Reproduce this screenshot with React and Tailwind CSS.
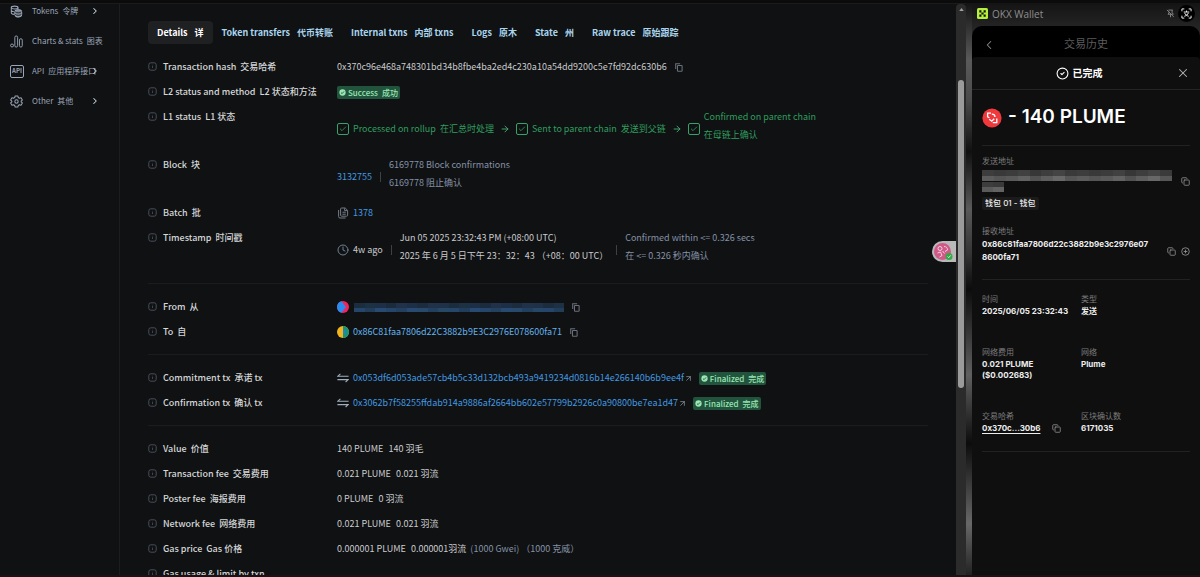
import React from 'react';
import { ArrowRight, ArrowUpRight, Check, ChevronLeft, ChevronRight, CircleCheck, Clock, Copy, X } from 'lucide-react';

const TABS = [
  ['Details', '详'],
  ['Token transfers', '代币转账'],
  ['Internal txns', '内部 txns'],
  ['Logs', '原木'],
  ['State', '州'],
  ['Raw trace', '原始跟踪'],
];

const FEES = [
  ['Value', '价值', '140 PLUME', '140 羽毛'],
  ['Transaction fee', '交易费用', '0.021 PLUME', '0.021 羽流'],
  ['Poster fee', '海报费用', '0 PLUME', '0 羽流'],
  ['Network fee', '网络费用', '0.021 PLUME', '0.021 羽流'],
];

// shades of the masked address blocks
const BLUE_MASK = ['#233f5e', '#274767', '#26456a', '#223d5a', '#294a70', '#26456a', '#24405e', '#294a70', '#28486c'];
const GRAY_MASK = ['#5c5c5c', '#555555', '#5a5a5a', '#626262', '#525252', '#5e5e5e', '#686868', '#565656'];

/* ── Icons ────────────────────────────────────────────────────── */

const TokensIcon = () => (
  <svg viewBox="0 0 14 14" className="w-[13px] h-[13px]" fill="none" stroke="currentColor" strokeWidth="1.1">
    <ellipse cx="5" cy="2.8" rx="3.6" ry="1.6" />
    <path d="M1.4 2.8v5.6c0 .9 1.4 1.6 3.2 1.7M1.4 5.6c0 .8 1.2 1.4 2.8 1.6M8.6 2.8v1.4" />
    <rect x="5.2" y="5" width="7.4" height="7.8" rx="3" fill="#7a8494" stroke="#a0aec0" />
    <path d="M5.4 7.2c1.6 1.6 5.4 1.6 7 0M5.4 10c1.6 1.6 5.4 1.6 7 0" stroke="#101112" strokeWidth=".8" />
  </svg>
);

const ChartsIcon = () => (
  <svg viewBox="0 0 14 14" className="w-[13px] h-[13px]" fill="none" stroke="currentColor" strokeWidth="1">
    <circle cx="2.2" cy="11.3" r="1.6" />
    <rect x="5.2" y="1" width="3" height="12" rx="1.5" />
    <rect x="10.2" y="4" width="3" height="9" rx="1.5" />
  </svg>
);

const ApiIcon = () => (
  <span className="flex items-center justify-center w-[14px] h-[13px] border border-current rounded-[2px] text-[6px] leading-none font-bold">
    API
  </span>
);

const GearIcon = () => (
  <svg viewBox="0 0 14 14" className="w-[13px] h-[13px]" fill="none" stroke="currentColor" strokeWidth="1.1" strokeLinejoin="round">
    <path d="M5.6 1h2.8l.5 1.7 1.3.8 1.7-.5 1.4 2.4L12 6.6v.8l1.3 1.2-1.4 2.4-1.7-.5-1.3.8-.5 1.7H5.6l-.5-1.7-1.3-.8-1.7.5L.7 8.6 2 7.4v-.8L.7 5.4 2.1 3l1.7.5 1.3-.8z" />
    <circle cx="7" cy="7" r="1.8" />
  </svg>
);

const InfoIcon = () => (
  <svg viewBox="0 0 9 9" className="w-[9px] h-[9px] mb-[2px] shrink-0 text-[#555d69]" fill="none" stroke="currentColor" strokeWidth=".8">
    <rect x=".8" y=".8" width="7.4" height="7.4" rx="2" />
    <path d="M4.5 4v2M4.5 2.8v.6" strokeWidth=".7" />
  </svg>
);

const CopyIcon = () => (
  <svg viewBox="0 0 9 10" className="w-[8px] h-[9px]" fill="none" stroke="currentColor" strokeWidth="1.2">
    <path d="M.8 6.8V.8h5" />
    <rect x="2.8" y="2.8" width="5.2" height="6.4" rx=".6" />
  </svg>
);

const BatchIcon = () => (
  <svg viewBox="0 0 12 12" className="w-[12px] h-[12px] text-[#737b87]" fill="none" stroke="currentColor" strokeWidth="1">
    <path d="M4.6 1h3.6l2.4 2.4v4.8a1 1 0 0 1-1 1h-5a1 1 0 0 1-1-1V2a1 1 0 0 1 1-1z" strokeLinejoin="round" />
    <path d="M1.6 3v6.6a1.4 1.4 0 0 0 1.4 1.4h5.6M5.4 5.2h3.4M5.4 7.2h3.4M7.6 1.4v2.2h2.8" />
  </svg>
);

const SwapIcon = () => (
  <svg viewBox="0 0 12 10" className="w-[12px] h-[10px] shrink-0 text-[#a0aec0]" fill="none" stroke="currentColor" strokeWidth="1.1">
    <path d="M11.6 3.2H.8l2.6-2.4M.4 6.6h10.8L8.6 9" />
  </svg>
);

const BadgeCheck = () => (
  <svg viewBox="0 0 8 8" className="w-[7px] h-[7px]">
    <circle cx="4" cy="4" r="3.6" fill="#9ae6b4" />
    <path d="M2.3 4.1l1.2 1.2 2.2-2.5" fill="none" stroke="#22543d" strokeWidth="1" />
  </svg>
);

const PlumeLogo = () => (
  <svg viewBox="0 0 20 20" className="w-[20px] h-[20px] shrink-0">
    <circle cx="10" cy="10" r="9.6" fill="#f0393d" />
    <g fill="none" stroke="#fff" strokeWidth="1.3">
      <path d="M9 5.2H5.6v3.6l1.8 1" />
      <path d="M9.8 6.2c2.2 0 3.2 1.2 3.2 2.8" />
      <path d="M7.2 11.2l2.6 2 2.4-2.4" />
      <path d="M14.8 10.6v4h-4" />
    </g>
  </svg>
);

const OkxLogo = () => (
  <svg viewBox="0 0 11 11" className="w-[11px] h-[11px]">
    <rect width="11" height="11" rx="1.5" fill="#b5f03c" />
    <path d="M2.3 2.3h2.1v2.1H2.3zM6.6 2.3h2.1v2.1H6.6zM4.4 4.4h2.2v2.2H4.4zM2.3 6.6h2.1v2.1H2.3zM6.6 6.6h2.1v2.1H6.6z" fill="#111" />
  </svg>
);

const PinOffIcon = () => (
  <svg viewBox="0 0 10 10" className="w-[9px] h-[9px] text-[#8a8a8a]" fill="none" stroke="currentColor" strokeWidth="1">
    <path d="M2.6 1.2h5M6.8 1.2v3l1.4 1.6H5.6M3.4 3v1.4L2.2 5.8h3M5 5.8v3.4M1 1l7.6 7.8" />
  </svg>
);

const ScanIcon = () => (
  <svg viewBox="0 0 12 12" className="w-[11px] h-[11px]" fill="none" stroke="#fff" strokeWidth="1">
    <path d="M1 3.6V1h2.6M8.4 1H11v2.6M11 8.4V11H8.4M3.6 11H1V8.4M3 4.4h6M6 2.8v1.6M4 5.4c.6 1.8 2.2 3 4.4 3.6M8 5.4c-.6 1.8-2.2 3-4.4 3.6" />
  </svg>
);

const Mask = ({ colors, count, className }) => (
  <svg viewBox={`0 0 ${count} 2`} preserveAspectRatio="none" shapeRendering="crispEdges" className={className}>
    {Array.from({ length: count * 2 }, (_, i) => (
      <rect
        key={i}
        x={i % count}
        y={Math.floor(i / count)}
        width="1"
        height="1"
        fill={colors[Math.floor(i / 2) % colors.length]}
        opacity={i < count ? 0.6 : 1}
      />
    ))}
  </svg>
);

/* ── Explorer ─────────────────────────────────────────────────── */

const Row = ({ en, zh, children }) => (
  <div className="flex">
    <dt className="flex items-center gap-[6px] w-[189px] h-[18px] shrink-0 font-medium text-[#d4d6d8]">
      <InfoIcon />
      <span className="flex gap-1">
        <span>{en}</span>
        <span>{zh}</span>
      </span>
    </dt>
    <dd className="flex items-center min-w-0">{children}</dd>
  </div>
);

const Divider = () => <div className="h-px mt-[6px] mb-[7px] bg-[#1a1c1e]" />;

const Stack = ({ children, className = '' }) => (
  <div className={`flex flex-col pb-[5px] ${className}`}>{children}</div>
);

const Separator = () => <span className="w-px h-[10px] bg-[#3c4148]" />;

const Badge = ({ en, zh }) => (
  <span className="flex items-center gap-[2px] h-[13px] px-[2px] rounded-[2px] bg-[#22543d] text-[#9ae6b4] text-[8px] leading-[13px] font-medium">
    <BadgeCheck />
    <span className="flex gap-1">
      <span>{en}</span>
      <span>{zh}</span>
    </span>
  </span>
);

const CopyButton = ({ label }) => (
  <button type="button" aria-label={label} className="ml-[8px] text-[#69707a]">
    <CopyIcon />
  </button>
);

const StepBox = () => (
  <span className="flex items-center justify-center w-[12px] h-[12px] mr-1 rounded-[2px] border border-[#38a169]">
    <Check size={8} strokeWidth={2.5} />
  </span>
);

const NavItem = ({ icon, en, zh, arrow }) => (
  <a href="#" className="relative flex items-center h-[14px] text-[#9aa5b8]">
    <span className="flex items-center w-[22px]">{icon}</span>
    <span className="flex gap-1 whitespace-nowrap">
      <span>{en}</span>
      <span>{zh}</span>
    </span>
    {arrow && <ChevronRight size={10} strokeWidth={2.5} className="absolute right-[19px] text-[#cbd5e0]" />}
  </a>
);

const Sidebar = () => (
  <nav className="w-[120px] shrink-0 flex flex-col gap-4 pl-[10px] border-r border-[#1b1d1f] text-[8px] leading-[14px]">
    <NavItem icon={<TokensIcon />} en="Tokens" zh="令牌" arrow />
    <NavItem icon={<ChartsIcon />} en="Charts & stats" zh="图表" />
    <NavItem icon={<ApiIcon />} en="API" zh="应用程序接口" arrow />
    <NavItem icon={<GearIcon />} en="Other" zh="其他" arrow />
  </nav>
);

const HashLink = ({ children }) => (
  <a href="#" className="text-[#63b3ed] whitespace-nowrap">
    {children}
  </a>
);

const ParentTx = ({ hash }) => (
  <>
    <SwapIcon />
    <a href="#" className="flex items-center ml-1 mr-[6px] text-[#4299e1] whitespace-nowrap">
      {hash}
      <ArrowUpRight size={9} className="text-[#8b949e]" />
    </a>
    <Badge en="Finalized" zh="完成" />
  </>
);

const Details = () => (
  <dl className="flex flex-col gap-[7px] mt-[14px] whitespace-nowrap text-[#c9cbce]">
    <Row en="Transaction hash" zh="交易哈希">
      0x370c96e468a748301bd34b8fbe4ba2ed4c230a10a54dd9200c5e7fd92dc630b6
      <CopyButton label="Copy transaction hash" />
    </Row>
    <Row en="L2 status and method" zh="L2 状态和方法">
      <Badge en="Success" zh="成功" />
    </Row>
    <Row en="L1 status" zh="L1 状态">
      <div className="flex items-center text-[#2f9e5f]">
        <StepBox />
        <span>Processed on rollup</span>
        <span className="ml-1">在汇总时处理</span>
        <ArrowRight size={10} className="mx-[6px] text-[#48bb78]" />
        <StepBox />
        <span>Sent to parent chain</span>
        <span className="ml-1">发送到父链</span>
        <ArrowRight size={10} className="mx-[6px] text-[#48bb78]" />
        <StepBox />
        <Stack>
          <span>Confirmed on parent chain</span>
          <span>在母链上确认</span>
        </Stack>
      </div>
    </Row>
    <Row en="Block" zh="块">
      <a href="#" className="mr-[8px] text-[#4299e1]">3132755</a>
      <Separator />
      <Stack className="ml-[8px] text-[#8491a8]">
        <span>6169778 Block confirmations</span>
        <span>6169778 阻止确认</span>
      </Stack>
    </Row>
    <Row en="Batch" zh="批">
      <BatchIcon />
      <a href="#" className="ml-1 text-[#4299e1]">1378</a>
    </Row>
    <Row en="Timestamp" zh="时间戳">
      <Clock size={12} strokeWidth={2} className="text-[#718096]" />
      <span className="ml-1 mr-[8px]">4w ago</span>
      <Separator />
      <Stack className="mx-[8px]">
        <span>Jun 05 2025 23:32:43 PM (+08:00 UTC)</span>
        <span>2025 年 6 月 5 日下午 23：32：43 （+08：00 UTC）</span>
      </Stack>
      <Separator />
      <Stack className="ml-[8px] text-[#8491a8]">
        <span>Confirmed within &lt;= 0.326 secs</span>
        <span>在 &lt;= 0.326 秒内确认</span>
      </Stack>
    </Row>
    <Divider />
    <Row en="From" zh="从">
      <svg viewBox="0 0 12 12" className="w-[12px] h-[12px] mr-[5px]">
        <circle cx="6" cy="6" r="6" fill="#f0245e" />
        <path d="M4.5.2 9 6l-4.5 5.8A6 6 0 0 1 4.5.2z" fill="#2b8cf0" />
      </svg>
      <Mask colors={BLUE_MASK} count={40} className="w-[210px] h-[9px]" />
      <CopyButton label="Copy sender" />
    </Row>
    <Row en="To" zh="自">
      <svg viewBox="0 0 12 12" className="w-[12px] h-[12px] mr-1">
        <circle cx="6" cy="6" r="6" fill="#f2b51d" />
        <path d="M6 0a6 6 0 0 1 0 12z" fill="#12957a" />
        <path d="M6 3.5a2.5 2.5 0 0 1 0 5z" fill="#2b7fc4" />
      </svg>
      <HashLink>0x86C81faa7806d22C3882b9E3C2976E078600fa71</HashLink>
      <CopyButton label="Copy recipient" />
    </Row>
    <Divider />
    <Row en="Commitment tx" zh="承诺 tx">
      <ParentTx hash="0x053df6d053ade57cb4b5c33d132bcb493a9419234d0816b14e266140b6b9ee4f" />
    </Row>
    <Row en="Confirmation tx" zh="确认 tx">
      <ParentTx hash="0x3062b7f58255ffdab914a9886af2664bb602e57799b2926c0a90800be7ea1d47" />
    </Row>
    <Divider />
    {FEES.map(([en, zh, value, valueZh]) => (
      <Row key={en} en={en} zh={zh}>
        <span>{value}</span>
        <span className="ml-[5px]">{valueZh}</span>
      </Row>
    ))}
    <Row en="Gas price" zh="Gas 价格">
      <span>0.000001 PLUME</span>
      <span className="ml-[5px] mr-1">0.000001羽流</span>
      <span className="text-[#8491a8]">(1000 Gwei) （1000 克威）</span>
    </Row>
    <Row en="Gas usage & limit by txn" zh="" />
  </dl>
);

const Explorer = () => (
  <main className="relative flex-1 min-w-0 px-[28px] pt-[17px] overflow-hidden text-[9px] leading-[18px]">
    <div className="flex font-bold">
      {TABS.map(([en, zh], i) => (
        <button
          key={en}
          type="button"
          className={`flex gap-[7px] items-center h-[23px] px-[9px] rounded-[4px] whitespace-nowrap ${
            i === 0 ? 'bg-[#1f2022] text-white' : 'text-[#a9d5ee]'
          }`}
        >
          <span>{en}</span>
          <span>{zh}</span>
        </button>
      ))}
    </div>
    <Details />

    {/* extension handle stuck to the page edge */}
    <div className="absolute right-0 top-[237px] flex items-center w-[24px] h-[21px] pl-px rounded-l-full bg-[#b9b9b9]">
      <svg viewBox="0 0 20 20" className="w-[20px] h-[20px]">
        <circle cx="9.5" cy="9.5" r="8.5" fill="#cf5a88" />
        <g fill="none" stroke="#f3cfde" strokeWidth="1">
          <circle cx="7" cy="6.5" r="2" />
          <path d="M11 4.5c2.5 0 3.5 1.5 3.5 3.5L12 9.5M4.5 11l3-1 1.5 3.5-2.5 1.5M9.5 9l2 2.5" />
        </g>
        <circle cx="16" cy="14.5" r="3.5" fill="#35a847" />
        <path d="M14.5 14.5l1.2 1.2 2-2.3" fill="none" stroke="#d6f5dc" strokeWidth=".9" />
      </svg>
    </div>
  </main>
);

const Scrollbar = () => (
  <div className="w-[10px] shrink-0 flex flex-col items-center bg-[#2b2b2b] rounded-t-[4px]">
    <svg viewBox="0 0 6 4" className="w-[5px] h-[3px] mt-1 shrink-0">
      <path d="M3 0l3 4H0z" fill="#a0a0a0" />
    </svg>
    <div className="w-[6px] h-[54%] mt-[69px] rounded-full bg-[#9b9b9b]" />
  </div>
);

/* ── Wallet ───────────────────────────────────────────────────── */

const Field = ({ label, children }) => (
  <div className="flex flex-col">
    <dt className="font-normal text-[#7d7d7d] leading-[14px]">{label}</dt>
    <dd>{children}</dd>
  </div>
);

const WalletCopy = ({ label }) => (
  <button type="button" aria-label={label} className="text-[#8f8f8f]">
    <Copy size={9} strokeWidth={2.2} />
  </button>
);

const Wallet = () => (
  <aside className="w-[234px] shrink-0 flex bg-[linear-gradient(180deg,#141414_0%,#5a5a5a_10%,#4a4a4a_17%,#111_26%,#5a5a5a_36%,#333_44%,#0c0c0c_50%,#606060_65%,#0c0c0c_77%,#686868_91%,#222_100%)]">
    <div className="flex-1 min-w-0 ml-[6px] flex flex-col bg-[linear-gradient(180deg,#141414_0px,#2c2c2c_36px)] font-[Inter,'Noto_Sans_CJK_SC',sans-serif]">
      <header className="flex items-center h-[23px] shrink-0 px-[5px] pb-[2px] font-['Open_Sans','Noto_Sans_CJK_SC',sans-serif] text-[10px] leading-[14px] text-[#8f8f8f]">
        <OkxLogo />
        <span className="flex-1 ml-1">OKX Wallet</span>
        <PinOffIcon />
        <button type="button" aria-label="Scan" className="flex items-center justify-center w-[17px] h-[17px] ml-[3px] rounded-full bg-black">
          <ScanIcon />
        </button>
      </header>

      <div className="flex-1 flex flex-col rounded-t-[10px] bg-black">
        <div className="grid grid-cols-[20px_1fr_20px] items-center h-[37px] shrink-0 px-[10px] mb-[-6px] text-[11px] text-[#5c5c5c]">
          <button type="button" aria-label="Back" className="text-[#8a8a8a]">
            <ChevronLeft size={14} strokeWidth={1.8} />
          </button>
          <h1 className="text-center">交易历史</h1>
        </div>

        <section className="flex-1 rounded-t-[4px] bg-[#0f0f0f] text-[8px] font-bold text-[#ededed]">
          <div className="grid grid-cols-[20px_1fr_20px] items-center h-[33px] px-[10px] border-b border-[#242424]">
            <h2 className="col-start-2 flex items-center justify-center gap-1 pr-[14px] text-[10px] font-bold text-white">
              <CircleCheck size={13} strokeWidth={2} />
              已完成
            </h2>
            <button type="button" aria-label="Close" className="justify-self-end text-[#b5b5b5]">
              <X size={14} strokeWidth={1.8} />
            </button>
          </div>

          <div className="px-[10px]">
            <div className="flex items-center gap-[6px] h-[56px] border-b border-[#222]">
              <PlumeLogo />
              <strong className="text-[19px] font-semibold text-white whitespace-nowrap">- 140 PLUME</strong>
            </div>

            <dl className="flex flex-col gap-[14px] pt-[8px] pb-[15px] border-b border-[#222]">
              <Field label="发送地址">
                <div className="flex items-center justify-between mt-[2px]">
                  <div>
                    <Mask colors={GRAY_MASK} count={32} className="w-[190px] h-[11px]" />
                    <Mask colors={GRAY_MASK} count={4} className="w-[22px] h-[10px] mt-px" />
                  </div>
                  <WalletCopy label="Copy sender address" />
                </div>
                <span className="inline-block mt-[5px] px-[3px] rounded-[2px] bg-[#1b1b1b] font-medium leading-[13px]">钱包 01 - 钱包</span>
              </Field>
              <Field label="接收地址">
                <div className="flex items-center gap-[5px]">
                  <span className="flex-1 min-w-0 pr-[10px] break-all leading-[13px]">0x86c81faa7806d22c3882b9e3c2976e078600fa71</span>
                  <WalletCopy label="Copy recipient address" />
                  <button type="button" aria-label="Add contact" className="text-[#8f8f8f]">
                    <svg viewBox="0 0 10 10" className="w-[9px] h-[9px]" fill="none" stroke="currentColor" strokeWidth="1">
                      <circle cx="5" cy="5" r="4.2" />
                      <path d="M5 3v4M3 5h4" />
                    </svg>
                  </button>
                </div>
              </Field>
            </dl>

            <dl className="grid grid-cols-[99px_1fr] gap-y-[28px] pt-[12px] pb-[17px] border-b border-[#222] leading-[11px]">
              <Field label="时间">2025/06/05 23:32:43</Field>
              <Field label="类型">发送</Field>
              <Field label="网络费用">
                0.021 PLUME
                <br />
                ($0.002683)
              </Field>
              <Field label="网络">Plume</Field>
              <Field label="交易哈希">
                <span className="flex items-center gap-[12px]">
                  <a href="#" className="underline underline-offset-2">0x370c...30b6</a>
                  <WalletCopy label="Copy hash" />
                </span>
              </Field>
              <Field label="区块确认数">6171035</Field>
            </dl>
          </div>
        </section>
      </div>
    </div>
  </aside>
);

const App = () => (
  <div className="flex flex-col h-screen overflow-hidden bg-[#0b0b0c] pt-[3px] font-['Noto_Sans_CJK_SC',sans-serif]">
    <div className="flex flex-1 min-h-0 bg-[#101112] border-b-2 border-[#1c1114]">
      <div className="flex flex-1 min-w-0 border-t border-[#1b1b1c]">
        <Sidebar />
        <Explorer />
        <Scrollbar />
      </div>
      <Wallet />
    </div>
  </div>
);

export default App;
